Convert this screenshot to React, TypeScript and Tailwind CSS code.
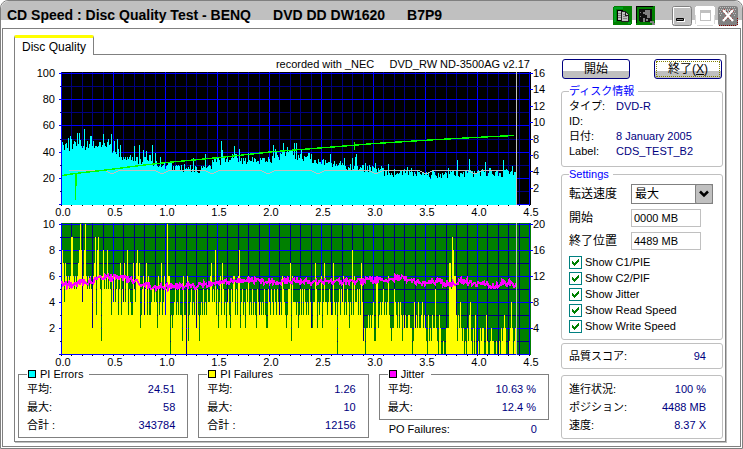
import { useState, type ReactNode } from 'react';

const PLOT_LEFT = 62;
const STEP = 52;

// [lowest, highest] PI error count for each block of ten samples
const PIE_RANGE = [
  [41, 47], [42, 50], [42, 49], [43, 50], [42, 49], [36, 45], [33, 41], [31, 38], [30, 38], [29, 36],
  [27, 33], [26, 32], [24, 31], [24, 30], [25, 32], [30, 37], [32, 39], [33, 40], [31, 37], [31, 37],
  [32, 38], [34, 41], [35, 43], [34, 43], [33, 40], [30, 36], [29, 35], [28, 34], [26, 33], [26, 31],
  [25, 31], [24, 30], [22, 29], [21, 28], [22, 28], [21, 27], [20, 26], [20, 26], [20, 26], [21, 27],
  [21, 28], [21, 28], [22, 29], [21, 28], [21, 28], [22, 28],
];

const PIE_PEAKS: Record<number, number> = {
  62: 48, 63: 46, 68: 51, 70: 53, 71: 50, 77: 55, 79: 55, 84: 58, 90: 53, 91: 53, 103: 54, 108: 50,
  111: 54, 114: 49, 117: 50, 120: 46, 134: 45, 139: 46, 143: 42, 146: 41, 152: 46, 155: 40, 160: 37,
  193: 36, 205: 39, 221: 49, 222: 42, 234: 45, 239: 43, 248: 40, 273: 46, 275: 43, 283: 47, 287: 44,
  290: 42, 294: 47, 296: 47, 301: 43, 309: 40, 330: 39, 344: 36, 352: 36, 355: 37, 356: 39, 365: 32,
  375: 32, 388: 31, 407: 29, 448: 28, 457: 34, 469: 35, 485: 33, 503: 34, 512: 30, 516: 38,
};

// one character per sample, A is ten
const PIF =
  '874765656996565678A8468A65656526793896516856585653646456357354746835433754786723' +
  '5635736334554542634734635A6603234534353316330613453435253134353435446745483524637534245325' +
  '466353682453425463435343254343435322543543543543436543235571' +
  '644434235353543435422447524346247443454337434045354634354243' +
  '836445353741202232323411662343453434632122543242431323223322' +
  '01423242234232103121322521032001002227759866313242120102134102030010212200310012' +
  '1100100102123200012420121';

const JITTER_LEVEL = [
  284, 285, 283, 281, 278, 277, 277, 280, 285, 287, 287, 287, 286, 286, 285, 283, 281, 281, 280, 280,
  281, 281, 281, 281, 281, 282, 281, 281, 282, 281, 281, 280, 280, 279, 277, 281, 283, 281, 282, 285,
  281, 284, 283, 287, 283, 284, 284,
];

function noise(n: number) {
  const v = Math.sin(n * 127.1) * 43758.5453;
  return v - Math.floor(v);
}

const pieBars = Array.from({ length: 455 }, (_, i) => {
  const x = PLOT_LEFT + i;
  const [low, high] = PIE_RANGE[Math.floor(i / 10)];
  const value = PIE_PEAKS[x] ?? low + noise(x) * (high - low);
  const h = Math.round(value * 1.31);
  return `M${x} 205v${-h}h1v${h}z`;
}).join('');

const pifBars = PIF.split('')
  .map((c, i) => {
    const h = parseInt(c, 16) * 13;
    return h ? `M${PLOT_LEFT + i} 354v${-h}h1v${h}z` : '';
  })
  .join('');

const jitterLine = Array.from({ length: 455 }, (_, i) => {
  const k = Math.floor(i / 10);
  const t = (i % 10) / 10;
  const y = JITTER_LEVEL[k] * (1 - t) + JITTER_LEVEL[k + 1] * t + (noise(i + 900) - 0.5) * 6;
  return `${PLOT_LEFT + i},${y.toFixed(1)}`;
}).join(' ');

const writeDips = [112, 162, 212, 268, 318, 376, 426, 475]
  .map((x) => `H${x - 7}L${x - 2} 173H${x + 2}L${x + 7} 170.5`)
  .join('');

const AXIS = ['0.0', '0.5', '1.0', '1.5', '2.0', '2.5', '3.0', '3.5', '4.0', '4.5'];

type PlotProps = {
  top: number;
  bottom: number;
  fill: string;
  left: string[];
  right: string[];
  children: ReactNode;
};

function Plot({ top, bottom, fill, left, right, children }: PlotProps) {
  const rows = Array.from({ length: 11 }, (_, i) => top + 1 + Math.round((i * (bottom - top - 2)) / 10));
  const cols = Array.from({ length: 46 }, (_, i) => Math.round(PLOT_LEFT - 1 + (i * STEP) / 5));
  return (
    <>
      <g shapeRendering="crispEdges">
        <rect x="61" y={top} width="470" height={bottom - top} fill={fill} />
        {cols.map((x, i) => (
          <rect key={x} x={x} y={top} width="1" height={bottom - top} fill={i % 5 ? '#000080' : '#0000ff'} />
        ))}
        {rows.map((y, i) => (
          <rect key={y} x={i % 2 ? 60 : 59} y={y} width={i % 2 ? 469 : 471} height="1" fill={i % 2 ? '#000080' : '#0000ff'} />
        ))}
        {right.map((label, i) => (
          <rect key={label} x="530" y={top + 1 + Math.round((i * (bottom - top - 2)) / right.length)} width="3" height="1" fill="#0000ff" />
        ))}
        {children}
        <rect x="516" y={top} width="1" height={bottom - top} fill="#c0c0c0" />
        {cols.map((x) => (
          <rect key={x} x={x} y={bottom} width="1" height="1" fill="#000" />
        ))}
      </g>
      <g fontSize="11" fill="#000">
        {left.map((label, i) => (
          <text key={label} x="55" y={top + 5 + (i * (bottom - top - 2)) / 5} textAnchor="end">{label}</text>
        ))}
        {right.map((label, i) => (
          <text key={label} x="533" y={top + 5 + (i * (bottom - top - 2)) / right.length}>{label}</text>
        ))}
        {AXIS.map((label, i) => (
          <text key={label} x={63 + i * STEP} y={bottom + 11} textAnchor="middle">{label}</text>
        ))}
      </g>
    </>
  );
}

function ErrorsChart() {
  return (
    <svg viewBox="15 55 542 163" className="block w-full overflow-visible" role="img" aria-label="PI Errors">
      <text x="530" y="68" textAnchor="end" fontSize="11">
        {'recorded with _NEC\u00a0\u00a0\u00a0\u00a0 DVD_RW ND-3500AG v2.17'}
      </text>
      <Plot
        top={72}
        bottom={205}
        fill="#000"
        left={['100', '80', '60', '40', '20']}
        right={['16', '14', '12', '10', '8', '6', '4', '2']}
      >
        <path d={pieBars} fill="#00ffff" />
        <path d={`M69 170.5${writeDips}H503`} fill="none" stroke="#c0c0c0" />
        <path
          d="M62 175.5L75 173.5L110 169.5L140 165.5L167 162.5L220 157.5L270 152L320 148L375 143.5L430 140L475 137.5L514 135.5"
          fill="none"
          stroke="#00ff00"
          strokeWidth="1.4"
        />
        <path d="M75 173h1v27h-1zM76 173h1v13h-1zM354 142h1v8h-1z" fill="#00ff00" />
      </Plot>
    </svg>
  );
}

function FailuresChart() {
  return (
    <svg viewBox="15 218 542 150" className="block w-full overflow-visible" role="img" aria-label="PI Failures and Jitter">
      <Plot
        top={223}
        bottom={355}
        fill="#008000"
        left={['10', '8', '6', '4', '2']}
        right={['20', '16', '12', '8', '4']}
      >
        <path d={pifBars} fill="#ffff00" />
        <polyline points={jitterLine} fill="none" stroke="#ff00ff" strokeWidth="2" />
      </Plot>
    </svg>
  );
}

function Row({ label, value, h = 'h-[18px]' }: { label: string; value: string; h?: string }) {
  return (
    <div className={`flex items-center justify-between ${h}`}>
      <dt>{label}</dt>
      <dd className="text-[#000080]">{value}</dd>
    </div>
  );
}

function StatBox({ title, swatch, rows }: { title: string; swatch: string; rows: string[][] }) {
  return (
    <fieldset className="min-w-0 border border-[#808080] pr-3 pb-[3px] pl-2">
      <legend className="flex items-center gap-1 pr-1.5 pl-px text-[11px] leading-[12px]">
        <span className={`size-2 border border-black ${swatch}`} />
        {title}
      </legend>
      <dl>
        {rows.map(([label, value]) => (
          <Row key={label} label={label} value={value} />
        ))}
      </dl>
    </fieldset>
  );
}

function Check({ label }: { label: string }) {
  const [on, setOn] = useState(true);
  return (
    <label className="flex h-4 items-center gap-[3px] text-[11px]">
      <span className="grid size-[13px]">
        <input
          type="checkbox"
          checked={on}
          onChange={() => setOn(!on)}
          className="col-start-1 row-start-1 size-[13px] appearance-none border border-[#008080] bg-white"
        />
        {on && (
          <svg viewBox="0 0 13 13" className="pointer-events-none col-start-1 row-start-1 size-[13px]" shapeRendering="crispEdges">
            <path d="M3 5h1v1h1v1h1v-1h1v-1h1v-1h1v-1h1v3h-1v1h-1v1h-1v1h-1v1h-1v-1h-1v-1h-1z" fill="#008000" />
          </svg>
        )}
      </span>
      {label}
    </label>
  );
}

function TitleBar() {
  return (
    <header className="flex h-[27px] items-center justify-between rounded-t-lg bg-linear-to-b from-[#c0c0c0] from-70% to-white to-70% pr-1 pl-1.5">
      <h1 className="flex gap-[22px] text-[14px] font-bold whitespace-nowrap">
        <span>CD Speed : Disc Quality Test - BENQ</span>
        <span>DVD DD DW1620</span>
        <span>B7P9</span>
      </h1>
      <div className="flex pt-0.5">
        <button aria-label="Copy" className="mr-1 size-[19px]">
          <svg viewBox="0 0 19 19" shapeRendering="crispEdges">
            <rect width="19" height="19" rx="2" fill="#008000" />
            <path d="M1 1h9v2H3v13H1zM15 16h3v2h-3z" fill="#00a020" />
            <path d="M4.500 4.500h5v10h-5z" fill="#c0c0c0" stroke="#000" />
            <path d="M8.500 5.500h4l3 3v7h-7z" fill="#c0c0c0" stroke="#202020" />
            <path d="M12 5v4h4" fill="none" stroke="#202020" />
            <path d="M5 7.500h3M5 9.500h3M5 11.500h3M10 8.500h2M10 10.500h4M10 12.500h4" stroke="#808080" />
          </svg>
        </button>
        <button aria-label="Save" className="mr-[17px] size-[19px]">
          <svg viewBox="0 0 19 19" shapeRendering="crispEdges">
            <rect width="19" height="19" rx="2" fill="#008000" />
            <path d="M0 0h17v1H0zM0 0h1v17H0z" fill="#000" />
            <path d="M3 3h13v13H4l-1-1z" fill="#101010" />
            <path d="M9 4h5v5H9zM7 6h2v2H7zM11 9h3v3h-3zM7 12h2v4H7zM10 13h2v2h-2zM4 6h1v1H4zM4 10h1v1H4z" fill="#808080" />
            <path d="M14 15h4v2h1v2h-3v-2h-2z" fill="#808080" />
          </svg>
        </button>
        <button aria-label="Minimize" className="mr-[3px] size-5">
          <svg viewBox="0 0 20 20">
            <rect x=".5" y=".5" width="19" height="19" rx="2" fill="#c0c0c0" stroke="#808080" />
            <path d="M1.500 18V1.500H18" fill="none" stroke="#fff" />
            <path d="M5 13h8v3H5z" fill="#fff" />
            <path d="M4.500 12.500h7v2h-7z" fill="#808080" stroke="#000" />
          </svg>
        </button>
        <button aria-label="Maximize" className="mr-[3px] size-5">
          <svg viewBox="0 0 20 20" shapeRendering="crispEdges">
            <rect width="20" height="20" rx="3" fill="#fff" />
            <path d="M2 19h16v1H2zM0 9h1v9H0zM19 9h1v9h-1z" fill="#d8d8d8" />
            <path d="M5.500 5.500h10v9h-10z" fill="#fff" stroke="#c0c0c0" />
            <path d="M5 4h11v3H5z" fill="#c0c0c0" />
          </svg>
        </button>
        <button aria-label="Close" className="size-5">
          <svg viewBox="0 0 20 20">
            <rect width="20" height="20" rx="3" fill="#808080" />
            <path
              d="M2 1.500h16M1 3.500h18M2 5.500h16M1 7.500h4M15 7.500h4M2 9.500h2M16 9.500h2M7 4.500h6M8 6.500h4"
              stroke="#c0c0c0"
              strokeDasharray="1 1"
            />
            <path d="M1 19.500h18M19.500 12v7" stroke="#800000" strokeDasharray="1 1" />
            <path d="M5 4l10 11M15 4L5 15" stroke="#800000" strokeWidth="3.600" strokeDasharray="1 2" />
            <path d="M5 4l10 11M15 4L5 15" stroke="#fff" strokeWidth="2.400" />
          </svg>
        </button>
      </div>
    </header>
  );
}

const sideBox = 'min-w-0 rounded-[3px] border border-[#c0c0c0] pl-[7px]';
const sideButton =
  'h-5 w-[68px] rounded-[3px] border border-[#000080] bg-linear-to-b from-white from-60% to-[#c0c0c0] to-60% text-[12px] leading-[16px]';

function SidePanel() {
  return (
    <aside className="w-[162px] shrink-0 pt-1">
      <div className="flex justify-between px-px">
        <button className={sideButton}>開始</button>
        <button className={`${sideButton} outline-1 -outline-offset-3 outline-dotted outline-[#808000]`}>
          終了(<u>X</u>)
        </button>
      </div>

      <fieldset className={`${sideBox} mt-1.5 pb-2`}>
        <legend className="pr-1 text-[11px] leading-[12px] text-[#0000ff]">ディスク情報</legend>
        <dl className="grid auto-rows-[15px] grid-cols-[47px_1fr] items-center pt-px">
          <dt>タイプ:</dt>
          <dd className="text-[#000080]">DVD-R</dd>
          <dt>ID:</dt>
          <dd />
          <dt>日付:</dt>
          <dd className="text-[#000080]">8 January 2005</dd>
          <dt>Label:</dt>
          <dd className="text-[#000080]">CDS_TEST_B2</dd>
        </dl>
      </fieldset>

      <fieldset className={`${sideBox} mt-px pb-[5px]`}>
        <legend className="pr-1 text-[11px] leading-[12px] text-[#0000ff]">Settings</legend>
        <div className="grid grid-cols-[62px_1fr] items-center gap-y-[5px] pt-1 pb-1">
          <label htmlFor="speed" className="text-[12px]">転送速度</label>
          <div className="relative w-[82px]">
            <select id="speed" className="block h-5 w-full appearance-none border border-[#808080] bg-white pl-[3px] text-[12px] leading-[16px]">
              <option>最大</option>
            </select>
            <span className="pointer-events-none absolute top-0 right-0 grid h-5 w-[18px] place-items-center rounded-[2px] border border-[#808080] bg-[#c0c0c0]">
              <svg viewBox="0 0 10 8" className="h-2 w-2.5">
                <path d="M1 1.500L5 5.500L9 1.500" fill="none" stroke="#000" strokeWidth="2.500" />
              </svg>
            </span>
          </div>
          <label htmlFor="start" className="text-[12px]">開始</label>
          <input id="start" defaultValue="0000 MB" className="h-[18px] w-[70px] border border-[#c0c0c0] pl-0.5 text-[11px]" />
          <label htmlFor="end" className="text-[12px]">終了位置</label>
          <input id="end" defaultValue="4489 MB" className="h-[18px] w-[70px] border border-[#c0c0c0] pl-0.5 text-[11px]" />
        </div>
        <Check label="Show C1/PIE" />
        <Check label="Show C2/PIF" />
        <Check label="Show Jitter" />
        <Check label="Show Read Speed" />
        <Check label="Show Write Speed" />
      </fieldset>

      <dl className={`${sideBox} mt-[3px] pt-[3px] pr-4 pb-[3px]`}>
        <Row label="品質スコア:" value="94" />
      </dl>
      <dl className={`${sideBox} mt-1.5 pt-1 pr-4 pb-1`}>
        <Row label="進行状況:" value="100 %" />
        <Row label="ポジション:" value="4488 MB" />
        <Row label="速度:" value="8.37 X" />
      </dl>
    </aside>
  );
}

export default function App() {
  return (
    <div className="flex min-h-screen flex-col rounded-t-lg border border-[#808080] bg-white font-['Liberation_Sans','Noto_Sans_CJK_JP',sans-serif] text-[11px] leading-[14px] text-black">
      <TitleBar />
      <main className="mx-px mb-px flex grow flex-col border border-[#808080] pt-1.5 pr-[14px] pb-1 pl-[11px]">
        <div role="tablist" className="relative -mb-px flex">
          <button
            role="tab"
            aria-selected="true"
            className="h-5 rounded-t-[2px] border-x border-t-[3px] border-x-[#808080] border-t-[#ffff00] bg-white px-[7px] text-[12px] leading-[14px]"
          >
            Disc Quality
          </button>
        </div>
        <div className="flex grow border border-[#808080] pr-0.5 shadow-[1px_1px_0_#c0c0c0]">
          <section className="mr-1 min-w-0 grow">
            <ErrorsChart />
            <FailuresChart />
            <div className="mr-2 ml-[3px] grid grid-cols-3 gap-[10px]">
              <StatBox title="PI Errors" swatch="bg-[#00ffff]" rows={[['平均:', '24.51'], ['最大:', '58'], ['合計 :', '343784']]} />
              <StatBox title="PI Failures" swatch="bg-[#ffff00]" rows={[['平均:', '1.26'], ['最大:', '10'], ['合計 :', '12156']]} />
              <div>
                <StatBox title="Jitter" swatch="bg-[#ff00ff]" rows={[['平均:', '10.63 %'], ['最大:', '12.4 %']]} />
                <dl className="pr-3 pl-[10px]">
                  <Row label="PO Failures:" value="0" />
                </dl>
              </div>
            </div>
          </section>
          <SidePanel />
        </div>
      </main>
    </div>
  );
}
